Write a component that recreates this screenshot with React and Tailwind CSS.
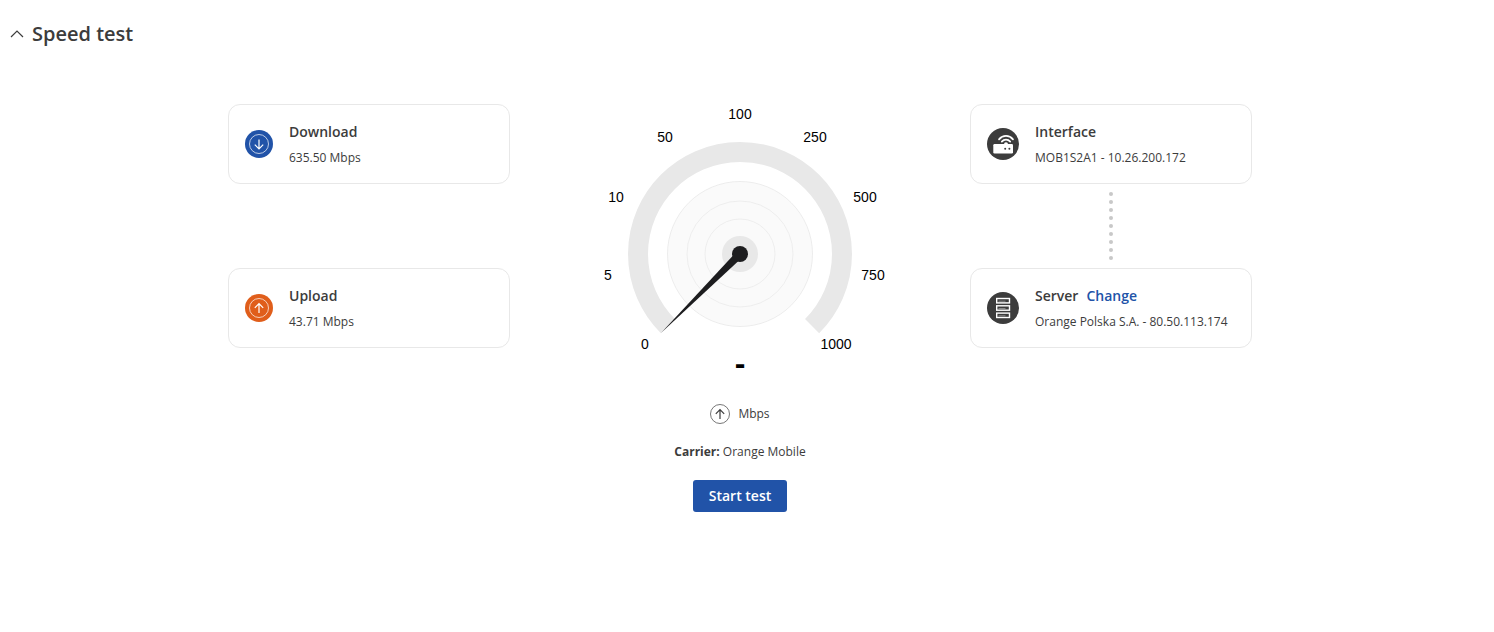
import React from "react";

const CENTER = 150;

const ticks = [
  { label: "0", x: 55, y: 245 },
  { label: "5", x: 18, y: 176 },
  { label: "10", x: 26, y: 98 },
  { label: "50", x: 75, y: 38 },
  { label: "100", x: 150, y: 15 },
  { label: "250", x: 225, y: 38 },
  { label: "500", x: 275, y: 98 },
  { label: "750", x: 283, y: 176 },
  { label: "1000", x: 246, y: 245 },
];

function ArrowBadge({ up, className }) {
  return (
    <span className={`flex size-7 shrink-0 items-center justify-center rounded-full text-white ${className}`}>
      <ArrowCircle up={up} />
    </span>
  );
}

function ArrowCircle({ up }) {
  return (
    <svg className="size-5" viewBox="0 0 20 20" fill="none" stroke="currentColor" aria-hidden="true">
      <circle cx="10" cy="10" r="9.5" strokeWidth="0.7" />
      <path d={up ? "M10 15V6M5.8 9.8 10 5.6l4.2 4.2" : "M10 5.5v9M5.8 10.7l4.2 4.2 4.2-4.2"} strokeWidth="1.2" />
    </svg>
  );
}

function RouterIcon() {
  return (
    <svg className="size-8 shrink-0" viewBox="0 0 32 32" aria-hidden="true">
      <circle cx="16" cy="16" r="16" fill="#3c3c3c" />
      <rect x="6.3" y="16" width="19.7" height="9.4" rx="1.2" fill="#fff" />
      <g fill="none" stroke="#fff" strokeWidth="1.7" strokeLinecap="round">
        <path d="M12 11.4c3.8-4.6 10.2-4.6 14 0" />
        <path d="M14.8 13.6c2.3-2.7 6.1-2.7 8.4 0" />
      </g>
      <path d="M17 16.2a2 2 0 0 1 4 0z" fill="#fff" />
      <circle cx="18.2" cy="20.8" r="1" fill="#3c3c3c" />
      <circle cx="22.4" cy="20.8" r="1" fill="#3c3c3c" />
    </svg>
  );
}

function ServerIcon() {
  return (
    <svg className="size-8 shrink-0" viewBox="0 0 32 32" aria-hidden="true">
      <circle cx="16" cy="16" r="16" fill="#3c3c3c" />
      <g fill="none" stroke="#fff" strokeWidth="1.4">
        <rect x="9.7" y="6.5" width="12.8" height="4.4" />
        <rect x="9.7" y="13.8" width="12.8" height="4.4" />
        <rect x="9.7" y="21.1" width="12.8" height="4.4" />
      </g>
      <path d="M11.5 9.2h7M11.5 16.5h7M11.5 23.8h7" stroke="#fff" strokeWidth="0.4" />
    </svg>
  );
}

function InfoCard({ icon, title, action, children }) {
  return (
    <div className="flex h-20 w-full items-center gap-4 rounded-xl border border-[#e8e8e8] px-4">
      {icon}
      <div>
        <div className="flex gap-2 text-sm leading-5 font-semibold">
          <h2>{title}</h2>
          {action}
        </div>
        <p className="mt-2 text-xs leading-4">{children}</p>
      </div>
    </div>
  );
}

function Gauge() {
  return (
    <svg
      className="h-[280px] w-[300px] font-['Liberation_Sans',Arial,sans-serif]"
      viewBox="0 0 300 280"
      role="img"
      aria-label="Speed gauge"
    >
      {/* Scale */}
      <path
        d="M77.9 222.1A102 102 0 1 1 222.1 222.1"
        fill="none"
        stroke="#e8e8e8"
        strokeWidth="20"
      />
      {ticks.map((tick) => (
        <text key={tick.label} x={tick.x} y={tick.y} textAnchor="middle" className="fill-black text-sm">
          {tick.label}
        </text>
      ))}

      {/* Dial */}
      <circle cx={CENTER} cy={CENTER} r="72.5" fill="#fafafa" stroke="#e8e8e8" strokeWidth="0.8" />
      <circle cx={CENTER} cy={CENTER} r="53" fill="none" stroke="#e8e8e8" strokeWidth="0.7" />
      <circle cx={CENTER} cy={CENTER} r="35" fill="none" stroke="#e8e8e8" strokeWidth="0.7" />
      <circle cx={CENTER} cy={CENTER} r="18" fill="#e8e8e8" />

      {/* Needle */}
      <path d="M71 229 144 150.5 149.5 156Z" fill="#1d1d1f" />
      <circle cx={CENTER} cy={CENTER} r="8" fill="#1d1d1f" />

      <text x={CENTER} y="270" textAnchor="middle" className="fill-black text-[32px] font-bold">
        -
      </text>
    </svg>
  );
}

function App() {
  return (
    <main className="bg-white pr-4 pb-8 pl-2 font-['Open_Sans',sans-serif] text-[#3c3c3c]">
      <h1 className="pt-5">
        <button type="button" aria-expanded="true" className="flex items-center gap-2 text-xl leading-7 font-semibold">
          <svg className="size-4" viewBox="0 0 16 16" fill="none" stroke="currentColor" strokeWidth="1.2" aria-hidden="true">
            <path d="m3 11 6-6 6 6" />
          </svg>
          Speed test
        </button>
      </h1>

      <section className="mt-14 flex flex-wrap items-start justify-center gap-20 pr-1.5">
        <div className="flex w-[282px] flex-col gap-[84px]">
          <InfoCard icon={<ArrowBadge className="bg-[#2153a8]" />} title="Download">
            635.50 Mbps
          </InfoCard>
          <InfoCard icon={<ArrowBadge up className="bg-[#e05e1b]" />} title="Upload">
            43.71 Mbps
          </InfoCard>
        </div>

        <div className="flex flex-col items-center">
          <Gauge />
          <div className="mt-5 flex items-center gap-2 text-xs">
            <ArrowCircle up />
            Mbps
          </div>
          <p className="mt-5 text-xs leading-4">
            <strong>Carrier:</strong> Orange Mobile
          </p>
          <button type="button" className="mt-5 h-8 rounded-[3px] bg-[#2153a8] px-4 text-sm font-semibold text-white">
            Start test
          </button>
        </div>

        <div className="flex w-[282px] flex-col items-center">
          <InfoCard icon={<RouterIcon />} title="Interface">
            MOB1S2A1 - 10.26.200.172
          </InfoCard>
          <div className="flex flex-col gap-1 py-2">
            {Array.from({ length: 9 }, (_, i) => (
              <span key={i} className="size-1 rounded-full bg-[#c8c8c8]" />
            ))}
          </div>
          <InfoCard
            icon={<ServerIcon />}
            title="Server"
            action={<a href="#server" className="text-[#2153a8]">Change</a>}
          >
            Orange Polska S.A. - 80.50.113.174
          </InfoCard>
        </div>
      </section>
    </main>
  );
}

export default App;
